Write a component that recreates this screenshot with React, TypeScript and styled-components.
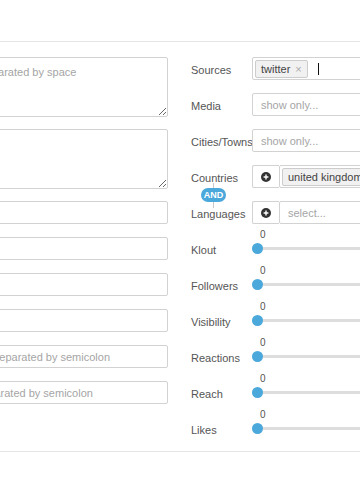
import React from 'react';
import styled, { createGlobalStyle } from 'styled-components';

const ACCENT = 'rgba(74, 168, 219, 1)';
const BORDER = 'rgba(210, 210, 210, 1)';
const LABEL = 'rgba(85, 85, 85, 1)';
const PLACEHOLDER = 'rgba(165, 165, 165, 1)';

const GlobalStyle = createGlobalStyle`
  html, body {
    margin: 0;
    padding: 0;
    background: #fff;
    overflow: hidden;
  }
  body {
    font-family: 'Liberation Sans', Arial, sans-serif;
    font-size: 11px;
    color: ${LABEL};
  }
`;

const Page = styled.div`
  width: 360px;
  height: 500px;
  overflow: hidden;
`;

const Header = styled.div`
  height: 41px;
  border-bottom: 1px solid rgba(229, 229, 229, 1);
`;

const Body = styled.div`
  display: flex;
  flex-direction: row;
  align-items: flex-start;
  gap: 23px;
  margin-left: -80px;
  padding-top: 15px;
  height: 394px;
  border-bottom: 1px solid rgba(229, 229, 229, 1);
`;

const LeftColumn = styled.div`
  width: 248px;
  flex-shrink: 0;
  display: flex;
  flex-direction: column;
`;

const TextArea = styled.textarea`
  box-sizing: border-box;
  width: 100%;
  height: 60px;
  margin: 0 0 12px 0;
  padding: 8px;
  border: 1px solid ${BORDER};
  border-radius: 2px;
  font-family: 'Liberation Sans', Arial, sans-serif;
  font-size: 11px;
  color: ${LABEL};
  outline: none;

  &::placeholder {
    color: ${PLACEHOLDER};
  }
`;

const TextInput = styled.input`
  box-sizing: border-box;
  width: 100%;
  height: 23px;
  margin: 0 0 13px 0;
  padding: 0 8px;
  border: 1px solid ${BORDER};
  border-radius: 2px;
  font-family: 'Liberation Sans', Arial, sans-serif;
  font-size: 11px;
  outline: none;

  &::placeholder {
    color: ${PLACEHOLDER};
  }
`;

const RightColumn = styled.div`
  width: 260px;
  flex-shrink: 0;
  display: flex;
  flex-direction: column;
`;

const Row = styled.div`
  display: flex;
  flex-direction: row;
  align-items: center;
  height: 23px;
  margin-bottom: 13px;
`;

const Label = styled.div`
  width: 61px;
  flex-shrink: 0;
  padding-top: 2px;
  white-space: nowrap;
  font-size: 11px;
  color: ${LABEL};
`;

const Box = styled.div<{ $pad?: number }>`
  position: relative;
  box-sizing: border-box;
  flex: 1;
  height: 23px;
  display: flex;
  flex-direction: row;
  align-items: center;
  gap: 10px;
  padding: 0 ${(p) => p.$pad ?? 8}px;
  background: #fff;
  border: 1px solid ${BORDER};
  border-radius: 2px;
`;

const Placeholder = styled.span`
  color: ${PLACEHOLDER};
`;

const Tag = styled.span`
  box-sizing: border-box;
  display: inline-flex;
  align-items: center;
  gap: 5px;
  height: 18px;
  padding: 0 5px;
  background: rgba(241, 241, 241, 1);
  border: 1px solid rgba(204, 204, 204, 1);
  border-radius: 2px;
  color: rgba(68, 68, 68, 1);
  white-space: nowrap;
`;

const TagClose = styled.span`
  color: rgba(170, 170, 170, 1);
  font-size: 11px;
`;

const Caret = styled.span`
  width: 1px;
  height: 12px;
  background: #111;
`;

const AddButton = styled.div`
  position: relative;
  box-sizing: border-box;
  width: 27px;
  height: 23px;
  flex-shrink: 0;
  display: flex;
  align-items: center;
  justify-content: center;
  border: 1px solid ${BORDER};
  border-right: none;
  border-radius: 2px 0 0 2px;
  background: #fff;
`;

const LogicGroup = styled.div`
  position: relative;
`;

const Connector = styled.div`
  position: absolute;
  left: 22px;
  top: 18px;
  width: 1px;
  height: 25px;
  background: rgba(200, 200, 200, 1);
`;

const AndBadge = styled.div`
  position: absolute;
  z-index: 1;
  left: 10px;
  top: 23px;
  width: 25px;
  height: 14px;
  border-radius: 7px;
  background: ${ACCENT};
  color: #fff;
  font-size: 9px;
  font-weight: bold;
  line-height: 14px;
  text-align: center;
`;

const SliderTrackArea = styled.div`
  position: relative;
  flex: 1;
  height: 23px;
  display: flex;
  align-items: center;
`;

const Track = styled.div`
  margin-left: 5px;
  flex: 1;
  height: 3px;
  background: rgba(221, 221, 221, 1);
`;

const Thumb = styled.div`
  position: absolute;
  left: 0px;
  top: 6px;
  width: 11px;
  height: 11px;
  border-radius: 50%;
  background: ${ACCENT};
`;

const SliderValue = styled.span`
  position: absolute;
  left: 8px;
  top: -8px;
  font-size: 10px;
  color: ${LABEL};
`;

function PlusIcon() {
  return (
    <svg width='10' height='10' viewBox='0 0 10 10'>
      <circle cx='5' cy='5' r='5' fill='#333' />
      <path d='M5 2.6v4.8M2.6 5h4.8' stroke='#fff' strokeWidth='1.4' />
    </svg>
  );
}

function SliderRow({ label }: { label: string }) {
  return (
    <Row>
      <Label>{label}</Label>
      <SliderTrackArea>
        <Track />
        <Thumb />
        <SliderValue>0</SliderValue>
      </SliderTrackArea>
    </Row>
  );
}

const SLIDERS = ['Klout', 'Followers', 'Visibility', 'Reactions', 'Reach', 'Likes'];

export default function App() {
  return (
    <Page>
      <GlobalStyle />
      <Header />
      <Body>
        <LeftColumn>
          <TextArea placeholder='Keywords separated by space' />
          <TextArea />
          <TextInput />
          <TextInput />
          <TextInput />
          <TextInput />
          <TextInput placeholder='Page names separated by semicolon' />
          <TextInput placeholder='Mentions separated by semicolon' />
        </LeftColumn>
        <RightColumn>
          <Row>
            <Label>Sources</Label>
            <Box $pad={2}>
              <Tag>
                twitter <TagClose>×</TagClose>
              </Tag>
              <Caret />
            </Box>
          </Row>
          <Row>
            <Label>Media</Label>
            <Box>
              <Placeholder>show only...</Placeholder>
            </Box>
          </Row>
          <Row>
            <Label>Cities/Towns</Label>
            <Box>
              <Placeholder>show only...</Placeholder>
            </Box>
          </Row>
          <LogicGroup>
            <Connector />
            <AndBadge>AND</AndBadge>
            <Row>
              <Label>Countries</Label>
              <AddButton>
                <PlusIcon />
              </AddButton>
              <Box $pad={2}>
                <Tag>united kingdom</Tag>
              </Box>
            </Row>
            <Row>
              <Label>Languages</Label>
              <AddButton>
                <PlusIcon />
              </AddButton>
              <Box>
                <Placeholder>select...</Placeholder>
              </Box>
            </Row>
          </LogicGroup>
          {SLIDERS.map((s) => (
            <SliderRow key={s} label={s} />
          ))}
        </RightColumn>
      </Body>
    </Page>
  );
}
